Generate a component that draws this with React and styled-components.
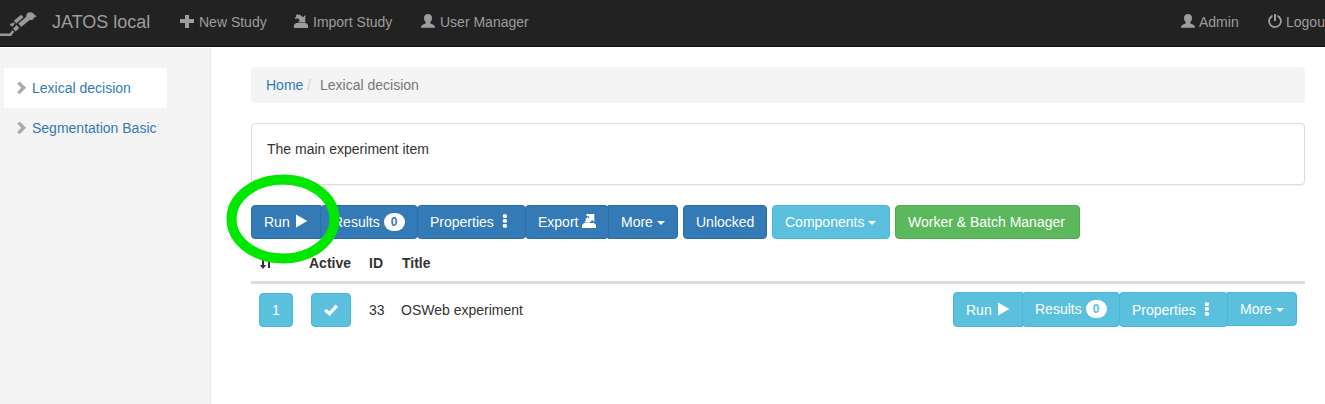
import React from "react";
import styled, { createGlobalStyle } from "styled-components";

const GlobalStyle = createGlobalStyle`
  * { box-sizing: border-box; }
  html, body { margin: 0; overflow: hidden; background: #fff; }
  body {
    font: 14px/20px "Liberation Sans", Arial, sans-serif;
    color: #333;
  }
`;

const Page = styled.div`
  position: relative;
  display: flex;
  flex-direction: column;
  height: 404px;
  overflow: hidden;
`;

const Navbar = styled.nav`
  display: flex;
  flex: none;
  height: 47px;
  background: #222;
  border-bottom: 1px solid #101010;
  color: #9d9d9d;
  white-space: nowrap;
  overflow: hidden;
`;

const Logo = styled.svg`
  flex: none;
  width: 37px;
  height: 25px;
  margin-top: 12px;
`;

const Brand = styled.span`
  width: 128px;
  padding: 12px 0 0 15px;
  font-size: 18px;
`;

const NavItem = styled.a`
  display: flex;
  flex: none;
  width: ${(p) => p.$width}px;
  padding: 12px 0 0 15px;
  margin-left: ${(p) => (p.$right ? "auto" : "0")};
  gap: ${(p) => p.$gap || 5}px;
`;

const Glyph = styled.svg`
  display: block;
  flex: none;
  width: 14px;
  height: 14px;
  margin-top: 2px;
  fill: currentColor;
`;

const Body = styled.div`
  display: flex;
  flex: 1;
  margin-top: 1px;
`;

const Sidebar = styled.aside`
  flex: none;
  width: 211px;
  padding: 20px 0 0 4px;
  background: #f4f4f4;
  border-right: 1px solid #e9e9e9;
`;

const SideLink = styled.a`
  display: flex;
  width: 163px;
  height: 40px;
  padding: 10px 0 0 11px;
  gap: 3px;
  color: #337ab7;
  background: ${(p) => (p.$active ? "#fff" : "transparent")};
  white-space: nowrap;
  ${Glyph} { color: #aaa; margin-top: 3px; }
`;

const Main = styled.main`
  display: flex;
  flex-direction: column;
  width: 1094px;
  flex: none;
  padding: 19px 0 0 40px;
`;

const Breadcrumb = styled.div`
  display: flex;
  height: 36px;
  padding: 8px 15px;
  background: #f4f4f4;
  border-radius: 4px;
  color: #777;
`;

const HomeLink = styled.a`
  width: 36px;
  color: #337ab7;
`;

const Slash = styled.span`
  width: 18px;
  padding-left: 5px;
  color: #ccc;
`;

const Panel = styled.section`
  height: 62px;
  margin-top: 20px;
  padding: 15px;
  border: 1px solid #ddd;
  border-radius: 4px;
  box-shadow: 0 1px 1px rgba(0, 0, 0, 0.05);
`;

const Toolbar = styled.div`
  display: flex;
  gap: 5px;
  margin-top: 20px;
`;

const ButtonGroup = styled.div`
  display: flex;
  align-items: flex-start;
  margin-left: ${(p) => (p.$end ? "auto" : "0")};
  > * { border-radius: 0; }
  > * + * { margin-left: -1px; }
  > :first-child { border-radius: 4px 0 0 4px; }
  > :last-child { border-radius: 0 4px 4px 0; }
`;

const tones = {
  primary: ["#337ab7", "#2e6da4"],
  info: ["#5bc0de", "#46b8da"],
  success: ["#5cb85c", "#4cae4c"],
};

const Button = styled.button`
  display: flex;
  flex: none;
  width: ${(p) => p.$width}px;
  height: ${(p) => (p.$tall ? 35 : 34)}px;
  padding: ${(p) => (p.$low ? 7 : 6)}px 12px;
  gap: 4px;
  font: inherit;
  color: #fff;
  white-space: nowrap;
  background: ${(p) => tones[p.$tone][0]};
  border: 1px solid ${(p) => tones[p.$tone][1]};
  border-radius: 4px;
`;

const Badge = styled.span`
  flex: none;
  width: 21px;
  height: 18px;
  margin-top: 1px;
  border-radius: 9px;
  background: #fff;
  color: ${(p) => tones[p.$tone][0]};
  font-size: 12px;
  font-weight: bold;
  line-height: 18px;
  text-align: center;
`;

const Caret = styled.span`
  width: 8px;
  height: 4px;
  margin-top: 9px;
  border: 4px solid transparent;
  border-top-color: #fff;
  border-bottom: 0;
`;

const columns = "52px 58px 32px 1fr";

const TableHead = styled.div`
  display: grid;
  grid-template-columns: ${columns};
  height: 45px;
  padding: 14px 8px 0;
  border-bottom: 3px solid #ddd;
  font-weight: bold;
  > :nth-child(2) { margin-left: -2px; }
  > :last-child { margin-left: 1px; }
`;

const TableRow = styled.div`
  display: grid;
  grid-template-columns: ${columns};
  padding: 8px 8px 0;
  > * { margin-top: 1px; }
`;

const Cell = styled.span`
  padding-top: 7px;
`;

const LastCell = styled.div`
  display: flex;
  && { margin-top: 0; }
`;

const TitleText = styled.span`
  padding-top: 8px;
`;

const Highlight = styled.svg`
  position: absolute;
  left: 226px;
  top: 174px;
  width: 114px;
  height: 90px;
  pointer-events: none;
`;

const shapes = {
  plus: <path d="M5 1h4v4h5v4H9v5H5V9H0V5h5z" />,
  import: <path d="M0 14v-3l2-2h10l2 2v3zM11.300 1v7.500H3.800l2-2.200L3.500 4.100 1.900 5.300.8 4.200 2.300 2.600 1.800 1.800 3.500 0l1.300 1.200L5.700.6l3.200 2.600z" />,
  export: <path d="M0 14v-3l2-2h10l2 2v3zM4.400 0H12.300v8L10.200 6 7.500 8.700 2 8.200l2.700-2.500-1.500-.3L5.500 3l1 1.500 1-1.800-3.100-1z" />,
  user: <path d="M7 0c2.400 0 4 1.500 4 3.900 0 1.700-.8 3.400-1.700 4.200v1.200l3.400 1.700c.8.4 1.300 1.300 1.300 2.700H0c0-1.400.5-2.300 1.300-2.700l3.400-1.700V8.100C3.800 7.300 3 5.600 3 3.900 3 1.500 4.600 0 7 0z" />,
  power: <path d="M6 0h2v7H6zM4.500.8v2.100a5 5 0 1 0 5 0V.8a6.800 6.800 0 1 1-5 0z" />,
  chevron: <path d="M2.200 2.700 4.600.4l6.500 6.400-6.500 6.500-2.400-2.400 4.100-4.100z" />,
  play: <path d="M2 .5v13L13.300 7z" />,
  dots: <g><rect x="4.900" y=".2" width="4" height="3.700" rx="1.200" /><rect x="4.900" y="5.100" width="4" height="3.700" rx="1.200" /><rect x="4.900" y="10" width="4" height="3.700" rx="1.200" /></g>,
  check: <path d="M0 9.200 2.300 6.800 5.300 9.500 11.600 2.600 14 5 5.600 14z" />,
  sort: <path d="M3 1h2v9h2.200L4 14 .8 10H3zM10 0l3.200 4H11v9H9V4H6.800z" />,
};

const Icon = ({ name }) => <Glyph viewBox="0 0 14 14">{shapes[name]}</Glyph>;

const RunGroup = ({ tone, row, children }) => (
  <ButtonGroup $end={row}>
    <Button $tone={tone} $width={row ? 70 : 70} $tall={row} $low={row}>Run<Icon name="play" /></Button>
    <Button $tone={tone} $width={98} $tall={row}>Results<Badge $tone={tone}>0</Badge></Button>
    <Button $tone={tone} $width={109} $tall={row} $low={row}>Properties<Icon name="dots" /></Button>
    {children}
    <Button $tone={tone} $width={70}>More<Caret /></Button>
  </ButtonGroup>
);

export default function App() {
  return (
    <Page>
      <GlobalStyle />
      <Navbar>
        <Logo viewBox="0 0 37 25">
          <circle cx="30.200" cy="4.200" r="3.900" fill="#999" />
          <path d="m33 1.500 3.700 2.800-3.700 2z" fill="#999" />
          <g fill="none" stroke="#999">
            <path d="m28.500 6-8.800 7.300" strokeWidth="4.600" />
            <path d="m18 14.600-3.700 3.300" strokeWidth="4" />
            <path d="m13.300 19-2.900 3.800H0" strokeWidth="2.500" />
            <path d="m22.300 4-7.300 6.200" strokeWidth="3.600" />
            <path d="m14 10.800-1.700 2.300-2.100-.8" strokeWidth="2.200" />
          </g>
        </Logo>
        <Brand>JATOS local</Brand>
        <NavItem $width={114}><Icon name="plus" />New Study</NavItem>
        <NavItem $width={127}><Icon name="import" />Import Study</NavItem>
        <NavItem $width={140}><Icon name="user" />User Manager</NavItem>
        <NavItem $width={87} $gap={4} $right><Icon name="user" />Admin</NavItem>
        <NavItem $width={72} $gap={4}><Icon name="power" />Logout</NavItem>
      </Navbar>
      <Body>
        <Sidebar>
          <SideLink $active><Icon name="chevron" />Lexical decision</SideLink>
          <SideLink><Icon name="chevron" />Segmentation Basic</SideLink>
        </Sidebar>
        <Main>
          <Breadcrumb><HomeLink>Home</HomeLink><Slash>/</Slash>Lexical decision</Breadcrumb>
          <Panel>The main experiment item</Panel>
          <Toolbar>
            <RunGroup tone="primary">
              <Button $tone="primary" $width={84}>Export<Icon name="export" /></Button>
            </RunGroup>
            <Button $tone="primary" $width={84}>Unlocked</Button>
            <Button $tone="info" $width={118}>Components<Caret /></Button>
            <Button $tone="success" $width={185}>Worker &amp; Batch Manager</Button>
          </Toolbar>
          <TableHead>
            <Icon name="sort" /><span>Active</span><span>ID</span><span>Title</span>
          </TableHead>
          <TableRow>
            <Button $tone="info" $width={34}>1</Button>
            <Button $tone="info" $width={40}><Icon name="check" /></Button>
            <Cell>33</Cell>
            <LastCell>
              <TitleText>OSWeb experiment</TitleText>
              <RunGroup tone="info" row />
            </LastCell>
          </TableRow>
        </Main>
      </Body>
      <Highlight viewBox="0 0 114 90">
        <ellipse cx="57" cy="45" rx="51.500" ry="39.500" fill="none" stroke="#00e800" strokeWidth="10" />
      </Highlight>
    </Page>
  );
}
